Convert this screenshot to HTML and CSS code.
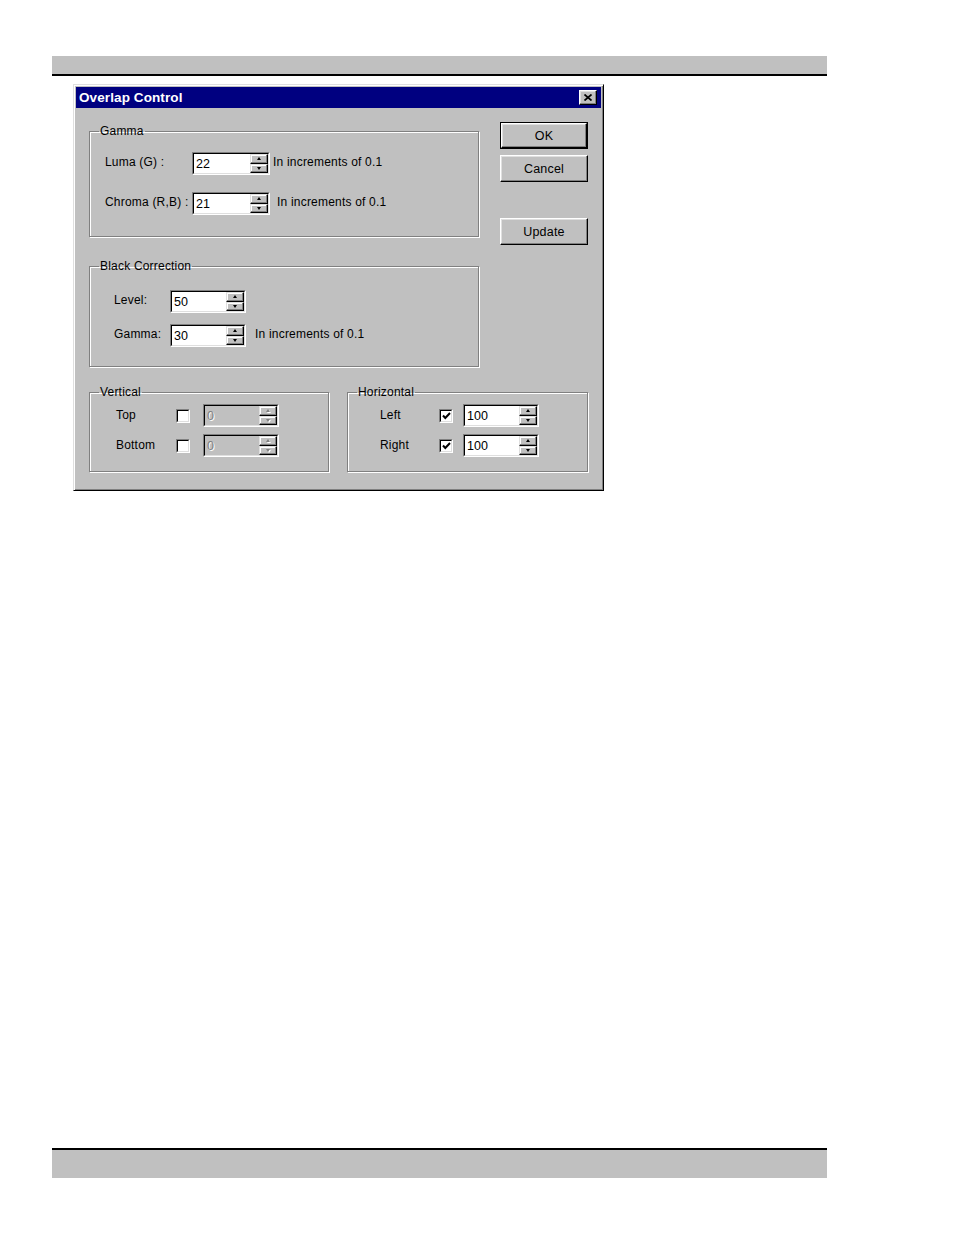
FILE: index.html
```html
<!DOCTYPE html>
<html>
<head>
<meta charset="utf-8">
<title>Overlap Control</title>
<link rel="stylesheet" href="styles.css">
</head>
<body>
<div class="topbar"></div>

<div class="dialog">
  <div class="titlebar">
    <span class="title">Overlap Control</span>
    <div class="close">
      <svg width="8" height="7" viewBox="0 0 8 7"><path d="M0.5 0.5 L7.5 6.5 M7.5 0.5 L0.5 6.5" stroke="#000" stroke-width="1.7" fill="none"/></svg>
    </div>
  </div>

  <div class="content">
    <div class="row1">
      <div class="leftcol">
        <fieldset class="group g-gamma">
          <legend>Gamma</legend>
          <div class="frow gam-row">
            <span class="lbl gam-lbl">Luma (G) :</span>
            <div class="edit gam-edit"><div class="edit-in"><span class="val">22</span><div class="spin"><div class="sb"><i class="up"></i></div><div class="sb"><i class="dn"></i></div></div></div></div>
            <span class="note n-luma">In increments of 0.1</span>
          </div>
          <div class="frow gam-row second-gam">
            <span class="lbl gam-lbl">Chroma (R,B) :</span>
            <div class="edit gam-edit"><div class="edit-in"><span class="val">21</span><div class="spin"><div class="sb"><i class="up"></i></div><div class="sb"><i class="dn"></i></div></div></div></div>
            <span class="note n-chroma">In increments of 0.1</span>
          </div>
        </fieldset>

        <fieldset class="group g-black">
          <legend>Black Correction</legend>
          <div class="frow blk-row">
            <span class="lbl blk-lbl">Level:</span>
            <div class="edit blk-edit"><div class="edit-in"><span class="val">50</span><div class="spin"><div class="sb"><i class="up"></i></div><div class="sb"><i class="dn"></i></div></div></div></div>
          </div>
          <div class="frow blk-row second-blk">
            <span class="lbl blk-lbl">Gamma:</span>
            <div class="edit blk-edit"><div class="edit-in"><span class="val">30</span><div class="spin"><div class="sb"><i class="up"></i></div><div class="sb"><i class="dn"></i></div></div></div></div>
            <span class="note n-blk">In increments of 0.1</span>
          </div>
        </fieldset>
      </div>

      <div class="buttons">
        <div class="btn default"><div class="btn-out"><div class="btn-in">OK</div></div></div>
        <div class="btn cancel"><div class="btn-out"><div class="btn-in">Cancel</div></div></div>
        <div class="btn update"><div class="btn-out"><div class="btn-in">Update</div></div></div>
      </div>
    </div>

    <div class="row2">
      <fieldset class="group g-vert">
        <legend>Vertical</legend>
        <div class="frow v-row">
          <span class="lbl v-lbl">Top</span>
          <div class="chk"><div class="chk-in"></div></div>
          <div class="edit v-edit disabled"><div class="edit-in"><span class="val">0</span><div class="spin"><div class="sb"><i class="up"></i></div><div class="sb"><i class="dn"></i></div></div></div></div>
        </div>
        <div class="frow v-row second-v">
          <span class="lbl v-lbl">Bottom</span>
          <div class="chk"><div class="chk-in"></div></div>
          <div class="edit v-edit disabled"><div class="edit-in"><span class="val">0</span><div class="spin"><div class="sb"><i class="up"></i></div><div class="sb"><i class="dn"></i></div></div></div></div>
        </div>
      </fieldset>

      <fieldset class="group g-horiz">
        <legend>Horizontal</legend>
        <div class="frow h-row">
          <span class="lbl h-lbl">Left</span>
          <div class="chk"><div class="chk-in"><svg width="9" height="8" viewBox="0 0 9 8"><path d="M1 3.5 L3.3 6 L8 1" stroke="#000" stroke-width="2" fill="none"/></svg></div></div>
          <div class="edit h-edit"><div class="edit-in"><span class="val">100</span><div class="spin"><div class="sb"><i class="up"></i></div><div class="sb"><i class="dn"></i></div></div></div></div>
        </div>
        <div class="frow h-row second-v">
          <span class="lbl h-lbl">Right</span>
          <div class="chk"><div class="chk-in"><svg width="9" height="8" viewBox="0 0 9 8"><path d="M1 3.5 L3.3 6 L8 1" stroke="#000" stroke-width="2" fill="none"/></svg></div></div>
          <div class="edit h-edit"><div class="edit-in"><span class="val">100</span><div class="spin"><div class="sb"><i class="up"></i></div><div class="sb"><i class="dn"></i></div></div></div></div>
        </div>
      </fieldset>
    </div>
  </div>
</div>

<div class="bottombar"></div>
</body>
</html>
```

FILE: styles.css
```css
html, body {
  margin: 0;
  padding: 0;
  background: #fff;
}
body {
  font-family: "Liberation Sans", Arial, sans-serif;
  font-size: 12px;
  color: #000;
}

.topbar {
  margin: 56px 0 0 52px;
  width: 775px;
  height: 18px;
  background: #c0c0c0;
  border-bottom: 2px solid #000;
}

.bottombar {
  margin: 657px 0 0 52px;
  width: 775px;
  height: 28px;
  background: #c0c0c0;
  border-top: 2px solid #000;
}

.dialog {
  box-sizing: border-box;
  margin: 8px 0 0 73px;
  width: 531px;
  height: 407px;
  background: #c0c0c0;
  border: 1px solid;
  border-color: #dfdfdf #000 #000 #dfdfdf;
  box-shadow: inset 1px 1px 0 #fff, inset -1px -1px 0 #808080;
  padding: 2px;
}

.titlebar {
  height: 21px;
  background: #000080;
  display: flex;
  align-items: center;
  justify-content: space-between;
}
.title {
  color: #fff;
  font-weight: bold;
  font-size: 13.5px;
  padding-left: 3px;
  letter-spacing: 0.1px;
}
.close {
  box-sizing: border-box;
  width: 18px;
  height: 15px;
  margin-right: 4px;
  background: #c0c0c0;
  border: 1px solid;
  border-color: #fff #000 #000 #fff;
  box-shadow: inset -1px -1px 0 #808080, inset 1px 1px 0 #dfdfdf;
  display: flex;
  align-items: center;
  justify-content: center;
}
.close svg { display: block; }

.content {
  padding-left: 13px;
}

.row1 {
  display: flex;
  align-items: flex-start;
}
.leftcol {
  width: 390px;
  margin-top: 16px;
}

fieldset.group {
  box-sizing: border-box;
  margin: 0;
  padding-left: 0;
  padding-right: 0;
  border: 1px solid #808080;
  box-shadow: inset 1px 1px 0 #fff, 1px 1px 0 #fff;
  min-inline-size: 0;
}
fieldset.group legend {
  padding: 0 1px;
  margin-left: 9px;
  line-height: 14px;
  letter-spacing: 0.2px;
}
.g-vert legend { margin-left: 8px; }

.g-gamma { width: 390px; padding-top: 14px; padding-bottom: 21px; }
.g-black { width: 390px; margin-top: 22px !important; padding-top: 17px; padding-bottom: 19px; }

.frow {
  display: flex;
  align-items: center;
  height: 23px;
}
.gam-row { padding-left: 15px; }
.blk-row { padding-left: 24px; }
.v-row { padding-left: 26px; }
.h-row { padding-left: 32px; }

.lbl, .note {
  letter-spacing: 0.2px;
  white-space: nowrap;
  padding-bottom: 3px;
}
.v-lbl, .h-lbl { padding-bottom: 1px; }
.gam-lbl { width: 87px; }
.second-gam { margin-top: 17px; }
.n-luma { margin-left: 3px; }
.n-chroma { margin-left: 7px; }

.blk-lbl { width: 56px; }
.second-blk { margin-top: 11px; }
.n-blk { margin-left: 9px; }

/* edit with spinner */
.edit {
  box-sizing: border-box;
  height: 23px;
  border: 1px solid;
  border-color: #808080 #fff #fff #808080;
}
.edit-in {
  box-sizing: border-box;
  height: 100%;
  border: 1px solid;
  border-color: #000 #dfdfdf #dfdfdf #000;
  background: #fff;
  display: flex;
  align-items: stretch;
}
.val {
  flex: 1;
  font-size: 12.5px;
  padding-left: 2px;
  display: flex;
  align-items: center;
}
.gam-edit { width: 78px; }
.blk-edit { width: 76px; }
.v-edit, .h-edit { width: 76px; }

.spin {
  width: 18px;
  display: flex;
  flex-direction: column;
}
.sb {
  box-sizing: border-box;
  flex: 1;
  background: #c0c0c0;
  border: 1px solid;
  border-color: #dfdfdf #000 #000 #dfdfdf;
  box-shadow: inset -1px -1px 0 #808080, inset 1px 1px 0 #fff;
  display: flex;
  align-items: center;
  justify-content: center;
}
.up, .dn {
  display: block;
  width: 0;
  height: 0;
  border-left: 2.5px solid transparent;
  border-right: 2.5px solid transparent;
}
.up { border-bottom: 3px solid #000; }
.dn { border-top: 3px solid #000; }

.disabled .edit-in { background: #c0c0c0; }
.disabled .val { color: #808080; text-shadow: 1px 1px 0 #fff; }
.disabled .up { border-bottom-color: #808080; filter: drop-shadow(1px 1px 0 #fff); }
.disabled .dn { border-top-color: #808080; filter: drop-shadow(1px 1px 0 #fff); }

/* buttons */
.buttons {
  margin-left: 21px;
  margin-top: 14px;
  display: flex;
  flex-direction: column;
}
.btn {
  box-sizing: border-box;
  width: 88px;
  height: 27px;
}
.btn.default {
  border: 1px solid #000;
}
.btn-out {
  box-sizing: border-box;
  height: 100%;
  border: 1px solid;
  border-color: #fff #000 #000 #fff;
  box-shadow: inset -1px -1px 0 #808080, inset 1px 1px 0 #dfdfdf;
  display: flex;
  align-items: center;
  justify-content: center;
}
.btn-in {
  letter-spacing: 0.2px;
  font-size: 12.5px;
}
.cancel { margin-top: 6px; }
.update { margin-top: 36px; }

/* row 2 */
.row2 {
  display: flex;
  margin-top: 18px;
}
.g-vert { width: 240px; padding-top: 5px; padding-bottom: 14px; }
.g-horiz { width: 241px; margin-left: 18px !important; padding-top: 5px; padding-bottom: 14px; }
.second-v { margin-top: 7px; }
.v-lbl { width: 60px; }
.h-lbl { width: 59px; }

.chk {
  box-sizing: border-box;
  width: 14px;
  height: 14px;
  border: 1px solid;
  border-color: #808080 #fff #fff #808080;
}
.chk-in {
  box-sizing: border-box;
  height: 100%;
  border: 1px solid;
  border-color: #000 #dfdfdf #dfdfdf #000;
  background: #fff;
  display: flex;
  align-items: center;
  justify-content: center;
}
.chk-in svg { display: block; }
.v-row .chk { margin-right: 13px; }
.h-row .chk { margin-right: 10px; }
```
